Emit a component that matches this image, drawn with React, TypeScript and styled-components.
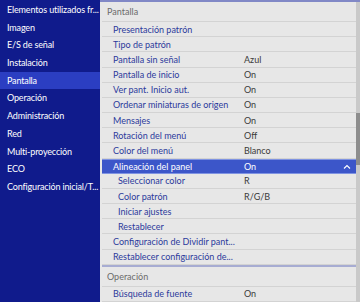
import React from 'react';
import styled, { createGlobalStyle } from 'styled-components';

const GlobalStyle = createGlobalStyle`
    html, body {
        margin: 0;
        padding: 0;
        background: #e7e7e7;
        font-family: Lato, 'Noto Sans', Arial, sans-serif;
    }
`;

const Screen = styled.div`
    display: flex;
    width: 360px;
    height: 302px;
    overflow: hidden;
`;

const Sidebar = styled.ul`
    width: 100px;
    flex-shrink: 0;
    margin: 0;
    padding: 1px 0 0;
    list-style: none;
    background: #101b8c;
`;

const SideItem = styled.li<{ $active?: boolean }>`
    height: 17.7px;
    line-height: 17.7px;
    padding-left: 7px;
    font-size: 9px;
    letter-spacing: -0.15px;
    color: #ffffff;
    white-space: nowrap;
    overflow: hidden;
    background: ${(p) => (p.$active ? '#2b3ec2' : 'transparent')};
`;

const Panel = styled.div`
    flex: 1;
    display: flex;
    background: #e7e7e7;
    border-top: 2px solid #8188c6;
    box-sizing: border-box;
    height: 302px;
`;

const PanelBody = styled.div`
    flex: 1;
    display: flex;
    flex-direction: column;
    padding-left: 2px;
`;

const GroupHeader = styled.div<{ $divider?: boolean }>`
    height: 19px;
    line-height: 19px;
    padding-left: 5px;
    font-size: 9px;
    color: #6b6b6b;
    border-top: ${(p) => (p.$divider ? '2px solid #a7acd2' : 'none')};
    border-bottom: 1px solid #d3d3d3;
`;

const Row = styled.div<{ $selected?: boolean }>`
    display: grid;
    grid-template-columns: 142px 1fr 18px;
    align-items: center;
    height: 15.8px;
    box-sizing: border-box;
    font-size: 9px;
    white-space: nowrap;
    border-bottom: 1px solid ${(p) => (p.$selected ? '#7f93e2' : '#d3d3d3')};
    border-top: ${(p) => (p.$selected ? '1px solid #7f93e2' : 'none')};
    background: ${(p) => (p.$selected ? '#3c56c9' : 'transparent')};
    color: ${(p) => (p.$selected ? '#ffffff' : '#2c3a9c')};
`;

const Name = styled.span<{ $sub?: boolean }>`
    padding-left: ${(p) => (p.$sub ? '16px' : '11px')};
`;

const Value = styled.span<{ $selected?: boolean }>`
    color: ${(p) => (p.$selected ? '#ffffff' : '#3a3a3a')};
`;

const Chevron = styled.svg`
    width: 8px;
    height: 5px;
    justify-self: center;
`;

const Scrollbar = styled.div`
    width: 4px;
    flex-shrink: 0;
    background: #c9c9c9;
    position: relative;
`;

const Thumb = styled.div`
    position: absolute;
    left: 0;
    right: 0;
    top: 111px;
    height: 52px;
    background: #8d8d8d;
`;

const sideItems = [
    'Elementos utilizados fr...',
    'Imagen',
    'E/S de señal',
    'Instalación',
    'Pantalla',
    'Operación',
    'Administración',
    'Red',
    'Multi-proyección',
    'ECO',
    'Configuración inicial/T...',
];

type Item = { name: string; value?: string; sub?: boolean; selected?: boolean };

const rows: Item[] = [
    { name: 'Presentación patrón' },
    { name: 'Tipo de patrón' },
    { name: 'Pantalla sin señal', value: 'Azul' },
    { name: 'Pantalla de inicio', value: 'On' },
    { name: 'Ver pant. Inicio aut.', value: 'On' },
    { name: 'Ordenar miniaturas de origen', value: 'On' },
    { name: 'Mensajes', value: 'On' },
    { name: 'Rotación del menú', value: 'Off' },
    { name: 'Color del menú', value: 'Blanco' },
    { name: 'Alineación del panel', value: 'On', selected: true },
    { name: 'Seleccionar color', value: 'R', sub: true },
    { name: 'Color patrón', value: 'R/G/B', sub: true },
    { name: 'Iniciar ajustes', sub: true },
    { name: 'Restablecer', sub: true },
    { name: 'Configuración de Dividir pant...' },
    { name: 'Restablecer configuración de...' },
];

export default function App() {
    return (
        <>
            <GlobalStyle />
            <Screen>
                <Sidebar>
                    {sideItems.map((s) => (
                        <SideItem key={s} $active={s === 'Pantalla'}>
                            {s}
                        </SideItem>
                    ))}
                </Sidebar>
                <Panel>
                    <PanelBody>
                        <GroupHeader>Pantalla</GroupHeader>
                        {rows.map((r) => (
                            <Row key={r.name} $selected={r.selected}>
                                <Name $sub={r.sub}>{r.name}</Name>
                                <Value $selected={r.selected}>{r.value}</Value>
                                {r.selected ? (
                                    <Chevron viewBox="0 0 8 5">
                                        <path d="M1 4.5 L4 1.5 L7 4.5" fill="none" stroke="#fff" strokeWidth="1.1" />
                                    </Chevron>
                                ) : (
                                    <span />
                                )}
                            </Row>
                        ))}
                        <GroupHeader $divider>Operación</GroupHeader>
                        <Row>
                            <Name>Búsqueda de fuente</Name>
                            <Value>On</Value>
                            <span />
                        </Row>
                    </PanelBody>
                    <Scrollbar>
                        <Thumb />
                    </Scrollbar>
                </Panel>
            </Screen>
        </>
    );
}
